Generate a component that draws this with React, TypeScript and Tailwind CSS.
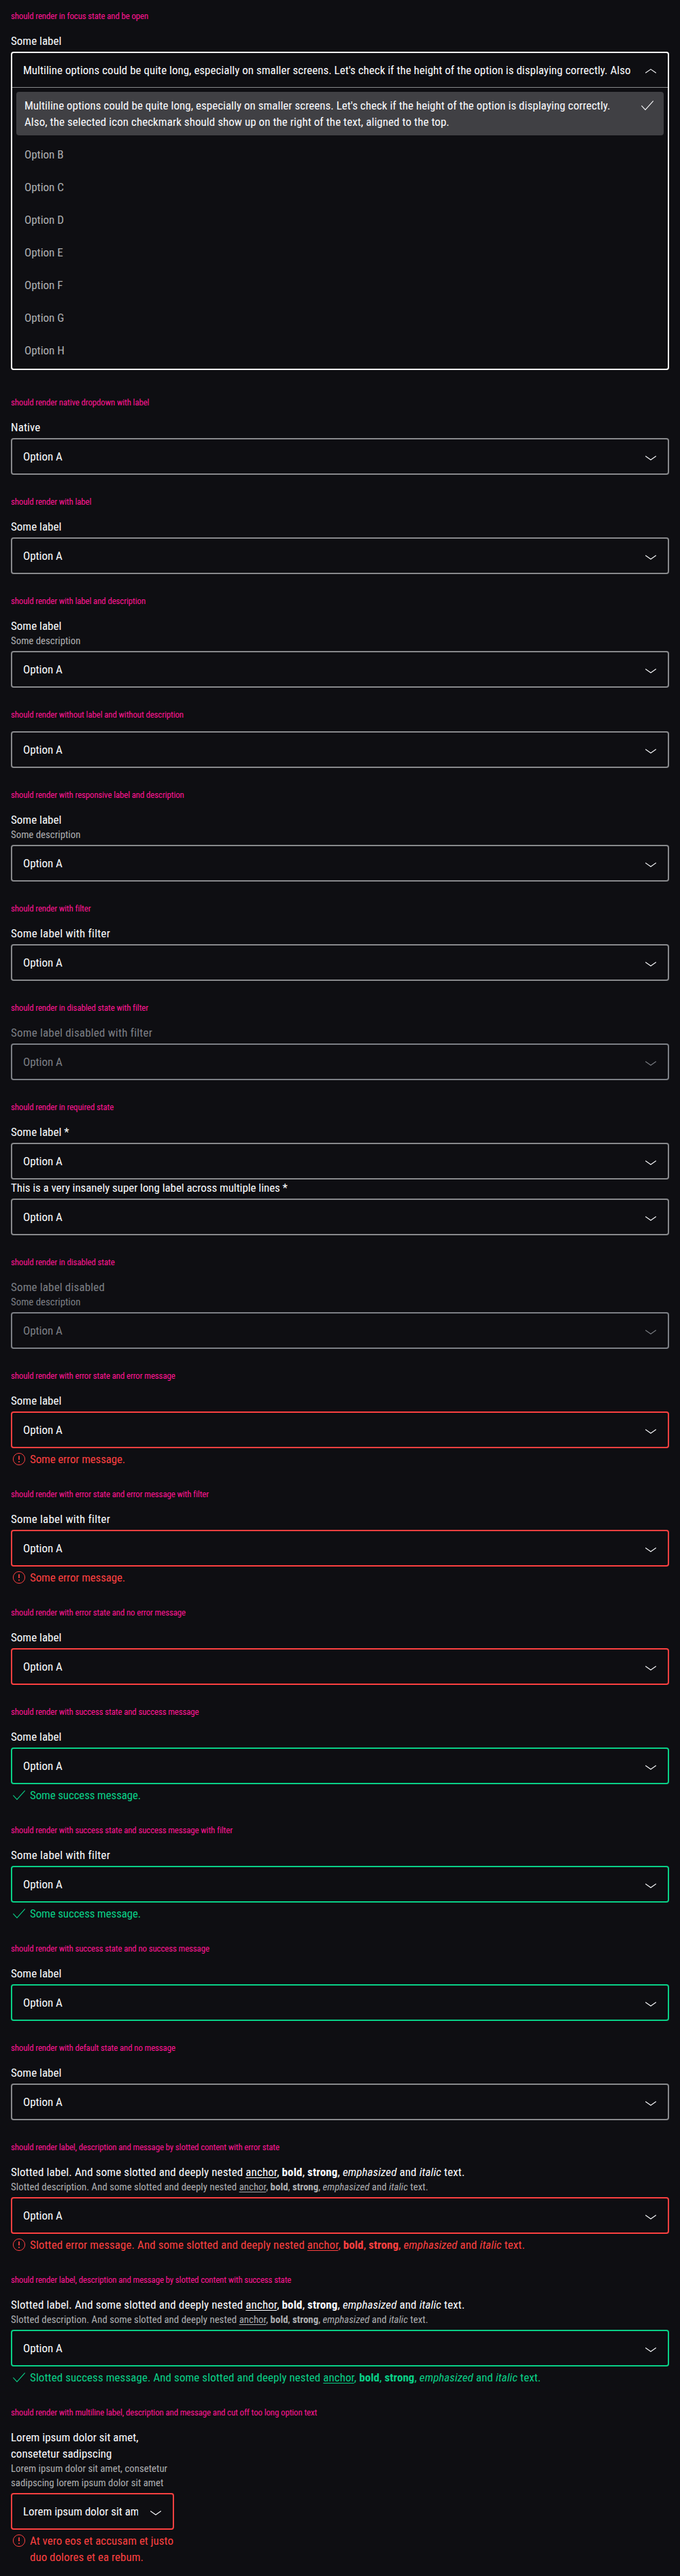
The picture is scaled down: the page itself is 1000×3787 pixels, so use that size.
import type { ReactNode } from 'react';

type State = 'none' | 'error' | 'success';

const borderColor: Record<State, string> = {
  none: 'border-[#88898c]',
  error: 'border-[#fc4040]',
  success: 'border-[#09d087]',
};

function Chevron({ up = false }: { up?: boolean }) {
  return (
    <svg className="size-6 shrink-0" viewBox="0 0 24 24" fill="none" stroke="currentColor" strokeWidth="1.05">
      <path d={up ? 'M4.2 16.3 12 10.8l7.8 5.5' : 'M4.2 11.5 12 17l7.8-5.5'} />
    </svg>
  );
}

function Check() {
  return (
    <svg className="size-6 shrink-0" viewBox="0 0 24 24" fill="none" stroke="currentColor" strokeWidth="1.1">
      <path d="m3.4 12.4 5.6 6L20.7 5.3" />
    </svg>
  );
}

function Exclamation() {
  return (
    <svg className="size-6 shrink-0" viewBox="0 0 24 24" fill="none" stroke="currentColor">
      <circle cx="12" cy="12" r="8.6" strokeWidth="1" />
      <path d="M12 7.2V13M12 15v1.8" strokeWidth="1.7" />
    </svg>
  );
}

function Select({
  label,
  description,
  state = 'none',
  message,
  value = 'Option A',
  disabled = false,
  tracking = '',
  descriptionTracking = '',
  messageTracking = '',
}: {
  label?: ReactNode;
  description?: ReactNode;
  state?: State;
  message?: ReactNode;
  value?: string;
  disabled?: boolean;
  tracking?: string;
  descriptionTracking?: string;
  messageTracking?: string;
}) {
  const box = disabled ? 'border-[#7c7f85] text-[#7c7f85]' : borderColor[state];
  return (
    <div>
      {(label || description) && (
        <div className="mb-1">
          {label && <div className={`${disabled ? 'text-[#7c7f85]' : ''} ${tracking}`}>{label}</div>}
          {description && (
            <div
              className={`text-[14.875px] leading-[21px] ${disabled ? 'text-[#7c7f85]' : 'text-[#afb0b3]'} ${descriptionTracking}`}
            >
              {description}
            </div>
          )}
        </div>
      )}
      <div className={`flex h-[54px] items-center justify-between rounded border-2 pr-[13px] pl-4 ${box}`}>
        <span className="mr-[14.5px] min-w-0 flex-1 overflow-hidden tracking-[-0.03px] whitespace-nowrap">{value}</span>
        <Chevron />
      </div>
      {message && (
        <div className={`mt-1 flex gap-1 ${state === 'error' ? 'text-[#fc4040]' : 'text-[#09d087]'}`}>
          {state === 'error' ? <Exclamation /> : <Check />}
          <div className={messageTracking}>{message}</div>
        </div>
      )}
    </div>
  );
}

function Section({ title, children }: { title: string; children: ReactNode }) {
  return (
    <section className="pt-4">
      <h2 className="mb-4 h-4 text-[13px] leading-4 tracking-[-0.17px] whitespace-nowrap text-[#ff1493]">{title}</h2>
      {children}
    </section>
  );
}

function Nested() {
  return (
    <>
      And some slotted and deeply nested <span className="underline underline-offset-2">anchor</span>, <b>bold</b>,{' '}
      <strong>strong</strong>, <em>emphasized</em> and <i>italic</i> text.
    </>
  );
}

const options = ['Option B', 'Option C', 'Option D', 'Option E', 'Option F', 'Option G', 'Option H'];

function OpenSelect() {
  return (
    <div className="pb-2">
      <div className="mb-1">Some label</div>
      <div className="rounded border-2 border-white">
        <div className="flex h-[50px] items-center justify-between pr-[13px] pl-4">
          <span className="overflow-hidden tracking-[0.01px] whitespace-nowrap">
            Multiline options could be quite long, especially on smaller screens. Let's check if the height of the
            option is displaying correctly. Also
          </span>
          <Chevron up />
        </div>
        <div className="flex flex-col gap-2 border-t border-[#88898c] px-1.5 pt-1.5 pb-[7px]">
          <div className="flex justify-between rounded bg-[#404044] px-3 py-2">
            <div className="tracking-[0.025px]">
              Multiline options could be quite long, especially on smaller screens. Let's check if the height of the
              option is displaying correctly.
              <div className="tracking-[0.06px]">
                Also, the selected icon checkmark should show up on the right of the text, aligned to the top.
              </div>
            </div>
            <Check />
          </div>
          {options.map((option) => (
            <div key={option} className="px-3 py-2 text-[#afb0b3]">
              {option}
            </div>
          ))}
        </div>
      </div>
    </div>
  );
}

export default function App() {
  return (
    <main className="flex flex-col gap-4 bg-[#0e0e12] px-4 pb-4 font-[Roboto,'Liberation_Sans',sans-serif] text-[17px] leading-6 text-[#fbfcff] [font-stretch:75%]">
      <Section title="should render in focus state and be open">
        <OpenSelect />
      </Section>
      <Section title="should render native dropdown with label">
        <Select label="Native" tracking="tracking-[0.1px]" />
      </Section>
      <Section title="should render with label">
        <Select label="Some label" />
      </Section>
      <Section title="should render with label and description">
        <Select label="Some label" description="Some description" />
      </Section>
      <Section title="should render without label and without description">
        <Select />
      </Section>
      <Section title="should render with responsive label and description">
        <Select label="Some label" description="Some description" />
      </Section>
      <Section title="should render with filter">
        <Select label="Some label with filter" tracking="tracking-[0.2px]" />
      </Section>
      <Section title="should render in disabled state with filter">
        <Select label="Some label disabled with filter" tracking="tracking-[0.18px]" disabled />
      </Section>
      <Section title="should render in required state">
        <Select label="Some label *" />
        <Select
          label="This is a very insanely super long label across multiple lines *"
          tracking="tracking-[-0.07px]"
        />
      </Section>
      <Section title="should render in disabled state">
        <Select
          label="Some label disabled"
          description="Some description"
          tracking="tracking-[0.15px]"
          disabled
        />
      </Section>
      <Section title="should render with error state and error message">
        <Select
          label="Some label"
          state="error"
          message="Some error message."
          messageTracking="tracking-[-0.15px]"
        />
      </Section>
      <Section title="should render with error state and error message with filter">
        <Select
          label="Some label with filter"
          tracking="tracking-[0.2px]"
          state="error"
          message="Some error message."
          messageTracking="tracking-[-0.15px]"
        />
      </Section>
      <Section title="should render with error state and no error message">
        <Select label="Some label" state="error" />
      </Section>
      <Section title="should render with success state and success message">
        <Select
          label="Some label"
          state="success"
          message="Some success message."
          messageTracking="tracking-[-0.15px]"
        />
      </Section>
      <Section title="should render with success state and success message with filter">
        <Select
          label="Some label with filter"
          tracking="tracking-[0.2px]"
          state="success"
          message="Some success message."
          messageTracking="tracking-[-0.15px]"
        />
      </Section>
      <Section title="should render with success state and no success message">
        <Select label="Some label" state="success" />
      </Section>
      <Section title="should render with default state and no message">
        <Select label="Some label" />
      </Section>
      <Section title="should render label, description and message by slotted content with error state">
        <Select
          label={<>Slotted label. <Nested /></>}
          tracking="tracking-[0.11px]"
          description={<>Slotted description. <Nested /></>}
          descriptionTracking="tracking-[0.02px]"
          state="error"
          message={<>Slotted error message. <Nested /></>}
          messageTracking="tracking-[0.065px]"
        />
      </Section>
      <Section title="should render label, description and message by slotted content with success state">
        <Select
          label={<>Slotted label. <Nested /></>}
          tracking="tracking-[0.11px]"
          description={<>Slotted description. <Nested /></>}
          descriptionTracking="tracking-[0.02px]"
          state="success"
          message={<>Slotted success message. <Nested /></>}
          messageTracking="tracking-[0.065px]"
        />
      </Section>
      <Section title="should render with multiline label, description and message and cut off too long option text">
        <div className="w-60">
          <Select
            label="Lorem ipsum dolor sit amet, consetetur sadipscing"
            description="Lorem ipsum dolor sit amet, consetetur sadipscing lorem ipsum dolor sit amet"
            state="error"
            value="Lorem ipsum dolor sit amet"
            message={<>At vero eos et accusam et justo<br />duo dolores et ea rebum.</>}
          />
        </div>
      </Section>
    </main>
  );
}
